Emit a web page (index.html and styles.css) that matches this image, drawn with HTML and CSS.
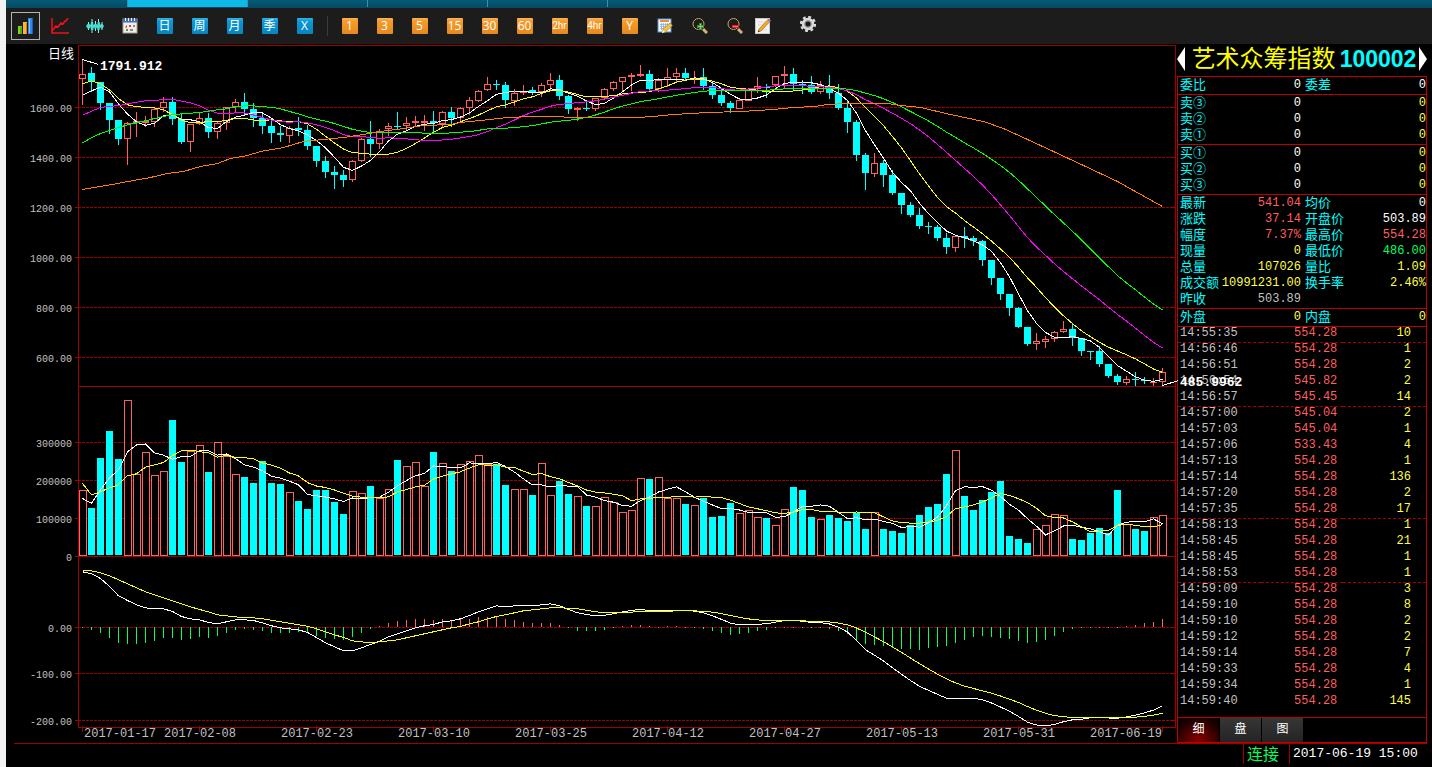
FILE: index.html
```
<!DOCTYPE html>
<html lang="zh-CN">
<head>
<meta charset="utf-8">
<title>艺术众筹指数 100002</title>
<link rel="stylesheet" href="styles.css">
</head>
<body>
<nav class="tabstrip" aria-label="窗口">
  <button class="tabstrip-tab" type="button" aria-label="1"></button>
  <button class="tabstrip-tab is-active" type="button" aria-label="2"></button>
  <button class="tabstrip-tab" type="button" aria-label="3"></button>
  <button class="tabstrip-tab" type="button" aria-label="4"></button>
  <button class="tabstrip-tab" type="button" aria-label="5"></button>
</nav>
<div class="toolbar" role="toolbar" aria-label="周期">
  <button class="tool is-selected" type="button" aria-label="柱状图"><svg class="icon" viewBox="0 0 16 16"><rect x="0" y="8" width="4" height="8" fill="#7ed321"/><rect x="2" y="9" width="2" height="7" fill="#4fae10"/><rect x="5" y="4" width="4" height="12" fill="#ffb53a"/><rect x="8" y="5" width="1" height="11" fill="#d67c08"/><rect x="10" y="0" width="5" height="16" fill="#2f86ee"/><rect x="11" y="1" width="1" height="14" fill="#8cc4ff"/><rect x="14" y="0" width="1" height="16" fill="#1560c0"/></svg></button>
  <button class="tool" type="button" aria-label="折线图"><svg class="icon icon-lg" viewBox="0 0 18 16"><path d="M1 0v15h17" fill="none" stroke="#f01018" stroke-width="1.500"/><path d="M1 13l4-5 2 1 3-4 2 1 2-3h1l2-3" fill="none" stroke="#f01018" stroke-width="1.700"/></svg></button>
  <button class="tool" type="button" aria-label="K线"><svg class="icon icon-lg" viewBox="0 0 18 16"><path d="M2.500 4v8M6 1v14M9.500 3v10M12.500 1v14M16 4v8" stroke="#8af4ea" stroke-width="1"/><path d="M0 8l1.500-2h2L4.500 7 5 4h2l.5 3 1-1h2l.8 1 .4-3h2l.6 3 .7-1h1.500L18 8l-1.500 2.500h-1.500L14 9l-.5 3h-2L11 9l-.5 1.500h-2L8 9l-.8 3H5l-.5-3-1 1.500h-2z" fill="#46dcd0"/></svg></button>
  <button class="tool" type="button" aria-label="日历"><svg class="icon" viewBox="0 0 16 16"><rect x="1" y="1" width="14" height="14" fill="#f0ece4" stroke="#b0a090"/><rect x="1" y="1" width="14" height="3.500" fill="#3a6fc0"/><path d="M3.500 0v3M6.500 0v3M9.500 0v3M12.500 0v3" stroke="#fff"/><path d="M3 9l2-2v3zM7 7h2v2H7z" fill="#e04040"/><path d="M11 7h2v2h-2zM8 11h3v2H8z" fill="#8a8a8a"/><path d="M4 11h2v2H4z" fill="#3c9c50"/></svg></button>
  <button class="tool" type="button"><span class="tile tile-blue">日</span></button>
  <button class="tool" type="button"><span class="tile tile-blue">周</span></button>
  <button class="tool" type="button"><span class="tile tile-blue">月</span></button>
  <button class="tool" type="button"><span class="tile tile-blue">季</span></button>
  <button class="tool" type="button"><span class="tile tile-blue">X</span></button>
  <span class="tool-sep"></span>
  <button class="tool" type="button"><span class="tile tile-orange">1</span></button>
  <button class="tool" type="button"><span class="tile tile-orange">3</span></button>
  <button class="tool" type="button"><span class="tile tile-orange">5</span></button>
  <button class="tool" type="button"><span class="tile tile-orange">15</span></button>
  <button class="tool" type="button"><span class="tile tile-orange">30</span></button>
  <button class="tool" type="button"><span class="tile tile-orange">60</span></button>
  <button class="tool" type="button"><span class="tile tile-orange tile-small">2hr</span></button>
  <button class="tool" type="button"><span class="tile tile-orange tile-small">4hr</span></button>
  <button class="tool" type="button"><span class="tile tile-orange">Y</span></button>
  <button class="tool" type="button" aria-label="编辑日历"><svg class="icon" viewBox="0 0 16 16"><rect x="1" y="1" width="13" height="13" fill="#f6f8fc" stroke="#5a8fd0"/><rect x="3" y="2" width="9" height="2" fill="#f08a3c"/><path d="M3 6.500h9M3 8.500h9M3 10.500h7M4.500 5v7M6.500 5v7M8.500 5v7M10.500 5v5" stroke="#7da7dc" stroke-width=".7"/><path d="M5 15l1-4 7-6 2.500 2.500-7 6.500z" fill="#f2c23c" stroke="#a8781c" stroke-width=".6"/><path d="M5 15l1-3 2 2z" fill="#fff"/></svg></button>
  <button class="tool" type="button" aria-label="放大"><svg class="icon" viewBox="0 0 16 16"><path d="M11 11l4 4" stroke="#d8b070" stroke-width="3"/><circle cx="6.500" cy="6" r="5.500" fill="none" stroke="#c8a060"/><path d="M8.500 5v7M5 8.500h7" stroke="#3c8c3c" stroke-width="3"/><path d="M8.500 6v5M6 8.500h5" stroke="#7ccc70"/></svg></button>
  <button class="tool" type="button" aria-label="缩小"><svg class="icon" viewBox="0 0 16 16"><path d="M11 11l4 4" stroke="#d8b070" stroke-width="3"/><circle cx="6.500" cy="6" r="5.500" fill="none" stroke="#c8a060"/><path d="M5 8.500h7" stroke="#e81828" stroke-width="3"/><path d="M6 8.500h5" stroke="#ff7078"/></svg></button>
  <button class="tool tool-narrow" type="button" aria-label="画线"><svg class="icon" viewBox="0 0 16 16"><rect x=".5" y=".5" width="14" height="15" fill="#f4f4f4" stroke="#c8c8c8"/><path d="M3 4h7M3 7h5M3 12h9" stroke="#d8d8d8"/><path d="M3 14l1-3 9-9.500 2 2L6 13z" fill="#f5a623" stroke="#a86a10" stroke-width=".6"/><path d="M12.500 2l1.500-1.500 2 2L14.500 4z" fill="#a070c0"/><path d="M3 14l.6-1.800 1.200 1.200z" fill="#222"/></svg></button>
  <button class="tool tool-gear" type="button" aria-label="设置"><svg class="icon" viewBox="0 0 16 16"><g fill="none" stroke="#dcdcdc"><circle cx="8" cy="8" r="4.500" stroke-width="3.400"/><circle cx="8" cy="8" r="7" stroke-width="2.200" stroke-dasharray="2.900 2.600"/><circle cx="8" cy="8" r="3.400" stroke="#8a8a8a" stroke-width="1"/></g></svg></button>
</div>
<main class="workspace">
  <svg class="chart" id="chart" role="img" aria-label="日线"></svg>
  <aside class="quote">
    <header class="quote-head">
      <button class="arrow" type="button" aria-label="上一个"><svg class="arrow-icon" viewBox="0 0 8 24"><path d="M8 0v24L0 12z"/></svg></button>
      <h1 class="quote-title"><span class="quote-name">艺术众筹指数</span><span class="quote-code">100002</span></h1>
      <button class="arrow" type="button" aria-label="下一个"><svg class="arrow-icon" viewBox="0 0 8 24"><path d="M0 0v24l8-12z"/></svg></button>
    </header>
    <dl class="block">
      <div class="pair"><dt>委比</dt><dd class="white">0</dd></div><div class="pair"><dt>委差</dt><dd class="white">0</dd></div>
    </dl>
    <dl class="block">
      <div class="pair"><dt>卖③</dt><dd class="white">0</dd></div><div class="pair"><dd class="yellow">0</dd></div>
      <div class="pair"><dt>卖②</dt><dd class="white">0</dd></div><div class="pair"><dd class="yellow">0</dd></div>
      <div class="pair"><dt>卖①</dt><dd class="white">0</dd></div><div class="pair"><dd class="yellow">0</dd></div>
    </dl>
    <dl class="block">
      <div class="pair"><dt>买①</dt><dd class="white">0</dd></div><div class="pair"><dd class="yellow">0</dd></div>
      <div class="pair"><dt>买②</dt><dd class="white">0</dd></div><div class="pair"><dd class="yellow">0</dd></div>
      <div class="pair"><dt>买③</dt><dd class="white">0</dd></div><div class="pair"><dd class="yellow">0</dd></div>
    </dl>
    <dl class="block">
      <div class="pair"><dt>最新</dt><dd class="red">541.04</dd></div><div class="pair"><dt>均价</dt><dd class="white">0</dd></div>
      <div class="pair"><dt>涨跌</dt><dd class="red">37.14</dd></div><div class="pair"><dt>开盘价</dt><dd class="white">503.89</dd></div>
      <div class="pair"><dt>幅度</dt><dd class="red">7.37%</dd></div><div class="pair"><dt>最高价</dt><dd class="red">554.28</dd></div>
      <div class="pair"><dt>现量</dt><dd class="yellow">0</dd></div><div class="pair"><dt>最低价</dt><dd class="green">486.00</dd></div>
      <div class="pair"><dt>总量</dt><dd class="yellow">107026</dd></div><div class="pair"><dt>量比</dt><dd class="yellow">1.09</dd></div>
      <div class="pair"><dt>成交额</dt><dd class="yellow">10991231.00</dd></div><div class="pair"><dt>换手率</dt><dd class="yellow">2.46%</dd></div>
      <div class="pair"><dt>昨收</dt><dd class="gray">503.89</dd></div>
    </dl>
    <dl class="block">
      <div class="pair"><dt>外盘</dt><dd class="yellow">0</dd></div><div class="pair"><dt>内盘</dt><dd class="yellow">0</dd></div>
    </dl>
    <div class="ticks">
      <table class="tick-table">
        <tbody>
          <tr class="cut"><td>14:55:35</td><td>554.28</td><td>10</td></tr>
          <tr><td>14:56:46</td><td>554.28</td><td>1</td></tr>
          <tr><td>14:56:51</td><td>554.28</td><td>2</td></tr>
          <tr><td>14:56:54</td><td>545.82</td><td>2</td></tr>
          <tr class="cut"><td>14:56:57</td><td>545.45</td><td>14</td></tr>
          <tr><td>14:57:00</td><td>545.04</td><td>2</td></tr>
          <tr><td>14:57:03</td><td>545.04</td><td>1</td></tr>
          <tr><td>14:57:06</td><td>533.43</td><td>4</td></tr>
          <tr><td>14:57:13</td><td>554.28</td><td>1</td></tr>
          <tr><td>14:57:14</td><td>554.28</td><td>136</td></tr>
          <tr><td>14:57:20</td><td>554.28</td><td>2</td></tr>
          <tr class="cut"><td>14:57:35</td><td>554.28</td><td>17</td></tr>
          <tr><td>14:58:13</td><td>554.28</td><td>1</td></tr>
          <tr><td>14:58:45</td><td>554.28</td><td>21</td></tr>
          <tr><td>14:58:45</td><td>554.28</td><td>1</td></tr>
          <tr class="cut"><td>14:58:53</td><td>554.28</td><td>1</td></tr>
          <tr><td>14:59:09</td><td>554.28</td><td>3</td></tr>
          <tr><td>14:59:10</td><td>554.28</td><td>8</td></tr>
          <tr><td>14:59:10</td><td>554.28</td><td>2</td></tr>
          <tr><td>14:59:12</td><td>554.28</td><td>2</td></tr>
          <tr><td>14:59:14</td><td>554.28</td><td>7</td></tr>
          <tr><td>14:59:33</td><td>554.28</td><td>4</td></tr>
          <tr><td>14:59:34</td><td>554.28</td><td>1</td></tr>
          <tr><td>14:59:40</td><td>554.28</td><td>145</td></tr>
        </tbody>
      </table>
    </div>
    <div class="quote-tabs">
      <button class="quote-tab is-active" type="button">细</button>
      <button class="quote-tab" type="button">盘</button>
      <button class="quote-tab" type="button">图</button>
    </div>
  </aside>
</main>
<footer class="status">
  <span class="status-link">连接</span>
  <time class="status-time" datetime="2017-06-19T15:00">2017-06-19 15:00</time>
</footer>
<script src="chart.js"></script>
</body>
</html>
```
FILE: styles.css
```
* { box-sizing: border-box; }

body {
  margin: 0;
  min-height: 100vh;
  display: flex;
  flex-direction: column;
  background: #000;
  border-left: 6px solid #f2f2f2;
  color: #c0c0c0;
  font: 12px/16px "Liberation Mono", "Noto Sans CJK SC", monospace;
}

button {
  margin: 0;
  padding: 0;
  border: 0;
  background: none;
  color: inherit;
  font: inherit;
}

.tabstrip {
  height: 8px;
  display: flex;
  padding: 0 0 1px 2px;
  background: linear-gradient(#065a78, #044a64);
}

.tabstrip-tab {
  width: 120px;
  border-right: 1px solid #2f93c2;
}

.tabstrip-tab.is-active { background: #10b8e8; }

.toolbar {
  height: 36px;
  display: flex;
  align-items: center;
  padding-left: 1px;
  background: #1c1c1c;
}

.tool {
  width: 35px;
  height: 28px;
  display: flex;
  align-items: center;
  justify-content: center;
}

.tool.is-selected {
  width: 29px;
  margin: 0 2px 0 4px;
  border: 1px solid #b4b4b4;
}

.tool-narrow { width: 21px; }
.tool-gear { margin-left: 17px; padding-bottom: 4px; }

.icon { display: block; width: 16px; height: 16px; }
.icon-lg { width: 18px; }

.tile {
  width: 16px;
  height: 16px;
  border-radius: 1px;
  overflow: hidden;
  color: #fff;
  font: 12px/16px "Open Sans", "Noto Sans CJK SC", sans-serif;
  text-align: center;
}

.tile-blue { background: linear-gradient(#35b4e8, #0a98d8 20%, #0884c0); }
.tile-orange { background: linear-gradient(#ffb454, #f59a2a 20%, #e68a1e); }
.tile-small { font-family: Roboto, sans-serif; font-size: 10px; }

.tool-sep {
  width: 1px;
  height: 20px;
  margin: 0 4px 0 5px;
  background: #3c3c3c;
}

.workspace {
  flex: 1;
  display: grid;
  grid-template-columns: minmax(0, 1fr) 250px;
  padding-right: 5px;
}

.chart {
  display: block;
  position: relative;
  z-index: 1;
  width: 100%;
  height: 100%;
  overflow: visible;
  pointer-events: none;
}

.chart-line { fill: none; stroke-width: 1; }
.chart-text { fill: #c0c0c0; font-size: 12px; }
.chart-axis { font-size: 10px; text-anchor: end; }
.chart-name { fill: #fff; font-size: 13px; text-anchor: end; }
.chart-mark { fill: #fff; font-size: 13px; font-weight: bold; }
.anchor-middle { text-anchor: middle; }
.anchor-end { text-anchor: end; }

.quote {
  display: flex;
  flex-direction: column;
}

.quote-head {
  height: 32px;
  display: flex;
  align-items: center;
  justify-content: space-between;
  padding-bottom: 2px;
}

.arrow-icon { display: block; width: 8px; height: 24px; fill: #fff; }

.quote-title {
  margin: 0;
  display: flex;
  gap: 4px;
  padding-left: 4px;
  line-height: 28px;
}

.quote-name {
  color: #ffff00;
  font: 24px/24px "Noto Sans CJK SC", sans-serif;
}

.quote-code {
  color: #00ffff;
  font: bold 23px/28px "Liberation Sans", sans-serif;
}

.block {
  margin: 0;
  display: grid;
  grid-template-columns: 1fr 1fr;
  column-gap: 4px;
  padding: 0 0 1px 2px;
  border: 1px solid #c00000;
  border-bottom: 0;
}

.pair { display: flex; height: 16px; }
.pair dt { color: #00ffff; font: 13px/13px "Noto Sans CJK SC", sans-serif; }
.pair dd { margin: 0 0 0 auto; }

.white { color: #fff; }
.yellow { color: #ffff40; }
.red { color: #ff5f5f; }
.green { color: #00ff60; }
.gray { color: #c0c0c0; }

.ticks {
  flex: 1;
  border: 1px solid #c00000;
  border-bottom: 0;
}

.tick-table {
  width: 100%;
  border-spacing: 0;
  table-layout: fixed;
  line-height: 12px;
}

.tick-table td {
  height: 16px;
  padding: 0 0 3px 2px;
  border-bottom: 1px solid transparent;
  text-align: right;
}

.tick-table .cut td { border-bottom: 1px dashed #a00000; }
.tick-table td:nth-child(1) { text-align: left; color: #c0c0c0; }
.tick-table td:nth-child(2) { color: #ff5f5f; padding-right: 6px; }
.tick-table td:nth-child(3) { color: #ffff40; padding-right: 15px; }

.quote-tabs {
  height: 26px;
  display: flex;
  gap: 1px;
  border: 1px solid #c00000;
}

.quote-tab {
  width: 41px;
  padding-bottom: 4px;
  background: linear-gradient(#363636, #242424);
  color: #fff;
  font: 12px/16px "Noto Sans CJK SC", sans-serif;
}

.quote-tab.is-active { background: radial-gradient(circle at 50% 100%, #900000, #100000 26px); }

.status {
  height: 24px;
  display: flex;
  justify-content: flex-end;
  margin: 0 5px 0 8px;
  padding-bottom: 3px;
  border-top: 1px solid #a00000;
}

.status-link,
.status-time {
  border-left: 1px solid #a00000;
  padding-left: 3px;
}

.status-link {
  width: 46px;
  color: #00ff60;
  font: 16px/18px "Noto Sans CJK SC", sans-serif;
}

.status-time {
  width: 138px;
  color: #fff;
  font-size: 13px;
  line-height: 20px;
}
```
FILE: chart.js
```
// Candles: direction, high, body top, body bottom, low.
// Heights are in thirds of a pixel below the top of the price plot.
const early = `
u28,71,86,165 d51,69,96,126 d96,96,159,180 d159,159,210,252 d210,210,267,285 u217,220,269,345 u186,214,219,261 u199,213,218,231
u174,176,214,231 u141,157,176,185 d141,156,207,225 d192,207,276,282 u222,223,278,306 u186,205,223,225 d190,204,246,264 u214,220,248,267
u170,171,220,240 u147,157,171,186 d129,156,177,195 d159,177,204,231 d189,204,228,252 d213,228,249,279 d228,249,255,276 u228,234,257,279
d201,234,240,258 d225,240,288,300 d288,288,333,351 d319,333,366,384 d348,366,375,417 d360,375,390,411 u330,334,392,396 u264,268,334,336
d213,267,282,321 u237,244,284,297 u219,229,238,258 d186,228,231,240 u201,220,229,243 u198,213,220,231 u195,213,218,243 d183,213,219,249
u183,187,223,234 d171,186,204,231 u171,175,205,219 u141,151,175,195 u120,122,151,156 u81,103,121,123 d90,102,105,120 d96,105,150,174
u117,128,151,168 u105,122,127,135 d111,121,129,135 u99,106,128,141 u69,91,107,120 d75,90,138,150 d135,138,177,192 u171,175,180,213
d153,174,177,183 u144,145,179,183 u115,118,145,147 u93,97,118,123 u81,82,97,123 u69,76,82,123 u45,73,78,80 d60,72,117,123
u84,91,118,125 u54,82,91,111 u54,70,82,96 d54,69,84,93 u63,83,84,102 d54,81,108,120 d99,108,135,147 d117,135,159,168
d153,159,174,189 u147,151,177,178 u115,119,151,153 u81,109,118,129 d102,111,114,144 u78,79,107,111 u48,73,79,117 d54,72,102,120
d90,102,105,132 d78,105,126,132`;
const late = `
u63,76,98,102 d45,78,99,117 d72,99,144,150 d120,144,186,219 d180,186,285,303 d279,285,339,390 u279,310,342,351 d300,309,345,381
d330,345,399,405 d399,399,435,462 d426,435,465,471 d444,465,498,507 d486,498,500,522 d495,501,534,543 d519,534,561,582 u525,529,564,576
d501,528,534,564 d528,534,543,558 d540,543,600,618 d600,600,654,675 d654,654,702,720 d702,702,744,768 d741,744,801,804 d801,801,852,858
u819,844,854,870 u828,838,846,864 u813,817,839,846 u783,808,818,820 d789,807,834,858 d834,834,873,888 d873,873,876,900 d858,873,912,921
d912,912,948,954 d942,948,966,975 u948,958,969,975 d936,957,960,978 d951,960,963,972 u954,965,969,978 u924,937,966,978`;
const parse = (text, base) => text.trim().split(/\s+/).map(s => {
  const [high, top, bottom, low] = s.slice(1).split(",").map(v => base + v / 3);
  return { up: s[0] === "u", high, top, bottom, low };
});
const candles = parse(early, 50).concat(parse(late, 60));
const closes = candles.map(c => c.up ? c.top : c.bottom);

// Volume bar tops, thirds of a pixel, in two runs with their own base.
const volumes = [301,354,204,123,207,31,253,187,256,244,90,216,184,166,246,157,199,253,261,279,213,279,282,307,333,357,300,300,336,372,304,310,288,325,298,210]
  .map(v => 390 + v / 3)
  .concat([109,97,169,66,100,123,103,94,76,103,102,165,178,178,195,100,196,153,192,199,228,229,202,217,247,241,145,147,142,205,205,222,226,204,261,258,219,250,241,262,264,286,238,
    171,180,261,268,255,264,273,249,297,247,297,303,309,285,255,231,222,132,61,198,240,210,186,153,318,327,339,298,286,253,256,327,330,309,294,309,180,283,297,303,262,256]
    .map(v => 430 + v / 3));

// Moving average that starts from known values until n points exist.
function average(data, n, seed, base) {
  return data.map((_, i) => i < n - 1 && i < seed.length
    ? base + seed[i] / 3
    : data.slice(Math.max(0, i - n + 1), i + 1).reduce((a, b) => a + b, 0) / Math.min(n, i + 1));
}
const ma5 = average(closes, 5, [134,121,110,124], 50);
const ma10 = average(closes, 10, [100,91,100,118,144,163,169,170,172], 50);
const ma20 = average(closes, 20, [194,182,171,167,166,160,155,151,149,148,146,152,157,166,179,188,190,187,187], 50);
const ma30 = average(closes, 30, [277,262,249,240,231,223,217,211,204,198,193,190,188,186,182,178,175,169,166,166,169,170,175,183,190,199,206,212,219], 50);
const volMa5 = average(volumes, 5, [324,338,298,262], 390);
const volMa10 = average(volumes, 10, [279,313,304,292,283,256,250,230,223], 390);
const longMa = [[82,189],[100,186],[117,183],[133,180],[150,177],[167,173],[183,171],[200,166],[217,163],[230,158],[247,155],[260,151],[283,147],[303,141],[323,139],[343,137],[363,134],[380,131],[403,128],[423,125],[450,124],[460,122],[480,120],[507,117],[530,116],[553,116],[573,117],[637,117],[653,116],[673,114],[707,112],[740,111],[773,109],[793,107],[815,106],[827,104],[847,103],[887,103],[900,105],[920,107],[950,114],[983,121],[1003,128],[1027,139],[1053,151],[1083,165],[1117,181],[1133,190],[1162,206]];

// MACD: stored history first, then carried on from the closes.
const dif = [34,40,54,78,106,120,133,142,145,145,153,168,175,178,186,190,184,178,178,180,187,196,202,205,208,216,231,247,259,271,271,262,252,242,229,220,211,202,196,192,184,181,175,165,154,145,136,139,136,136,136,133,130,136,147,157,162,166].map(v => 560 + v / 3);
const dea = [31,31,37,46,58,70,82,94,103,112,121,130,139,147,154,163,166,169,172,172,175,179,184,188,193,197,205,214,223,231,241,244,247,244,241,238,232,226,220,214,208,202,198,190,184,175,168,163,157,151,148,145,142,142,143,145,149,154].map(v => 560 + v / 3);
let fast = 95, slow = 125;
closes.forEach((y, i) => {
  fast += (y - fast) * 2 / 13;
  slow += (y - slow) * 2 / 27;
  if (i < dif.length) return;
  dif.push(627 + (fast - slow) * 1.86);
  dea.push(dea[i - 1] + (dif[i] - dea[i - 1]) * 0.2);
});

const RED = "#a00000", UP = "#ff6060", DOWN = "#00ffff";
const svg = document.getElementById("chart");

function draw() {
  const box = svg.getBoundingClientRect();
  const kx = (box.width - 78) / 1093, ky = box.height / 699;
  const X = x => 72 + (x - 78) * kx;
  const Y = y => (y - 44) * ky;
  const out = [];
  const rect = (x, y, w, h, fill) => out.push(`<rect x="${Math.round(x)}" y="${Math.round(y)}" width="${Math.round(w)}" height="${Math.max(1, Math.round(h))}" fill="${fill}"/>`);
  const frame = (x, y, w, h) => out.push(`<rect x="${Math.round(x) + 0.5}" y="${Math.round(y) + 0.5}" width="${Math.round(w) - 1}" height="${Math.max(1, Math.round(h) - 1)}" fill="#000" stroke="${UP}"/>`);
  const text = (x, y, cls, s) => out.push(`<text class="chart-text ${cls}" x="${Math.round(x)}" y="${Math.round(y)}">${s}</text>`);
  const line = (pts, color) => out.push(`<polyline class="chart-line" stroke="${color}" points="${pts.map(p => `${(X(p[0]) + 0.5).toFixed(1)},${(Y(p[1]) + 0.5).toFixed(1)}`).join(" ")}"/>`);
  const at = i => 82 + i * 9;
  const series = (data, color) => line(data.map((y, i) => [at(i), y]), color);
  const width = X(1175) - X(78) + 1;

  out.push('<g shape-rendering="crispEdges">');
  [107,157,207,257,307,357,442,480,518,627,673,720].forEach(y => {
    out.push(`<path d="M${X(78)} ${Math.round(Y(y)) + 0.5}H${X(1175)}" stroke="${RED}" stroke-dasharray="3 1"/>`);
    rect(X(75), Y(y), 4, 1, RED);
    rect(X(1171), Y(y), 5, 1, RED);
  });
  [45,386,556,727].forEach(y => rect(X(78), Y(y), width, 1, RED));
  rect(X(78), Y(45), 1, Y(727) - Y(45), RED);
  rect(X(1175), Y(45), 1, Y(727) - Y(45), RED);
  rect(X(75), Y(556), 4, 1, RED);

  candles.forEach((c, i) => {
    const x = Math.round(X(at(i))), color = c.up ? UP : DOWN;
    rect(x, Y(c.high), 1, Y(c.low) - Y(c.high), color);
    if (c.up && c.bottom - c.top > 2) frame(x - 3, Y(c.top), 7, Y(c.bottom) - Y(c.top));
    else rect(x - 3, Y(c.top), 7, Y(c.bottom) - Y(c.top), color);
    const v = volumes[i];
    if (c.up) frame(x - 3, Y(v), 8, Y(556) - Y(v));
    else rect(x - 3, Y(v), 7, Y(555) - Y(v), color);
    const h = dif[i] - dea[i];
    rect(x, Y(627) + Math.min(0, h * ky), 1, Math.abs(h * ky), h < 0 ? UP : "#00ff60");
  });

  series(ma5, "#fff");
  series(ma10, "#ff0");
  series(ma20, "#f0f");
  series(ma30, "#0f0");
  line(longMa, "#ff8000");
  series(volMa5, "#fff");
  series(volMa10, "#ff0");
  series(dif, "#fff");
  series(dea, "#ff0");
  line([[82,59],[98,64]], "#fff");
  line([[1162,385],[1178,380]], "#fff");

  const dates = ["2017-01-17","2017-02-08","2017-02-23","2017-03-10","2017-03-25","2017-04-12","2017-04-27","2017-05-13","2017-05-31"];
  dates.forEach((_, i) => rect(X(at(i * 13)), Y(726), 1, 6, RED));
  rect(X(1162), Y(726), 1, 6, RED);
  out.push("</g>");

  dates.forEach((d, i) => text(X(at(i * 13)) + (i ? 1 : 2), Y(727) + 10, i ? "anchor-middle" : "", d));
  text(X(1162), Y(727) + 10, "anchor-end", "2017-06-19");
  [["1600.00",107],["1400.00",157],["1200.00",207],["1000.00",257],["800.00",307],["600.00",357],
   ["300000",442],["200000",480],["100000",518],["0",556],["0.00",627],["-100.00",673],["-200.00",720]]
    .forEach(([s, y]) => text(X(72), Y(y) + 5, "chart-axis", s));
  text(X(74), Y(58), "chart-name", "日线");
  text(X(100), Y(70), "chart-mark", "1791.912");
  text(X(1180), Y(386), "chart-mark", "485.9962");
  svg.innerHTML = out.join("");
}
draw();
window.addEventListener("resize", draw);
```
